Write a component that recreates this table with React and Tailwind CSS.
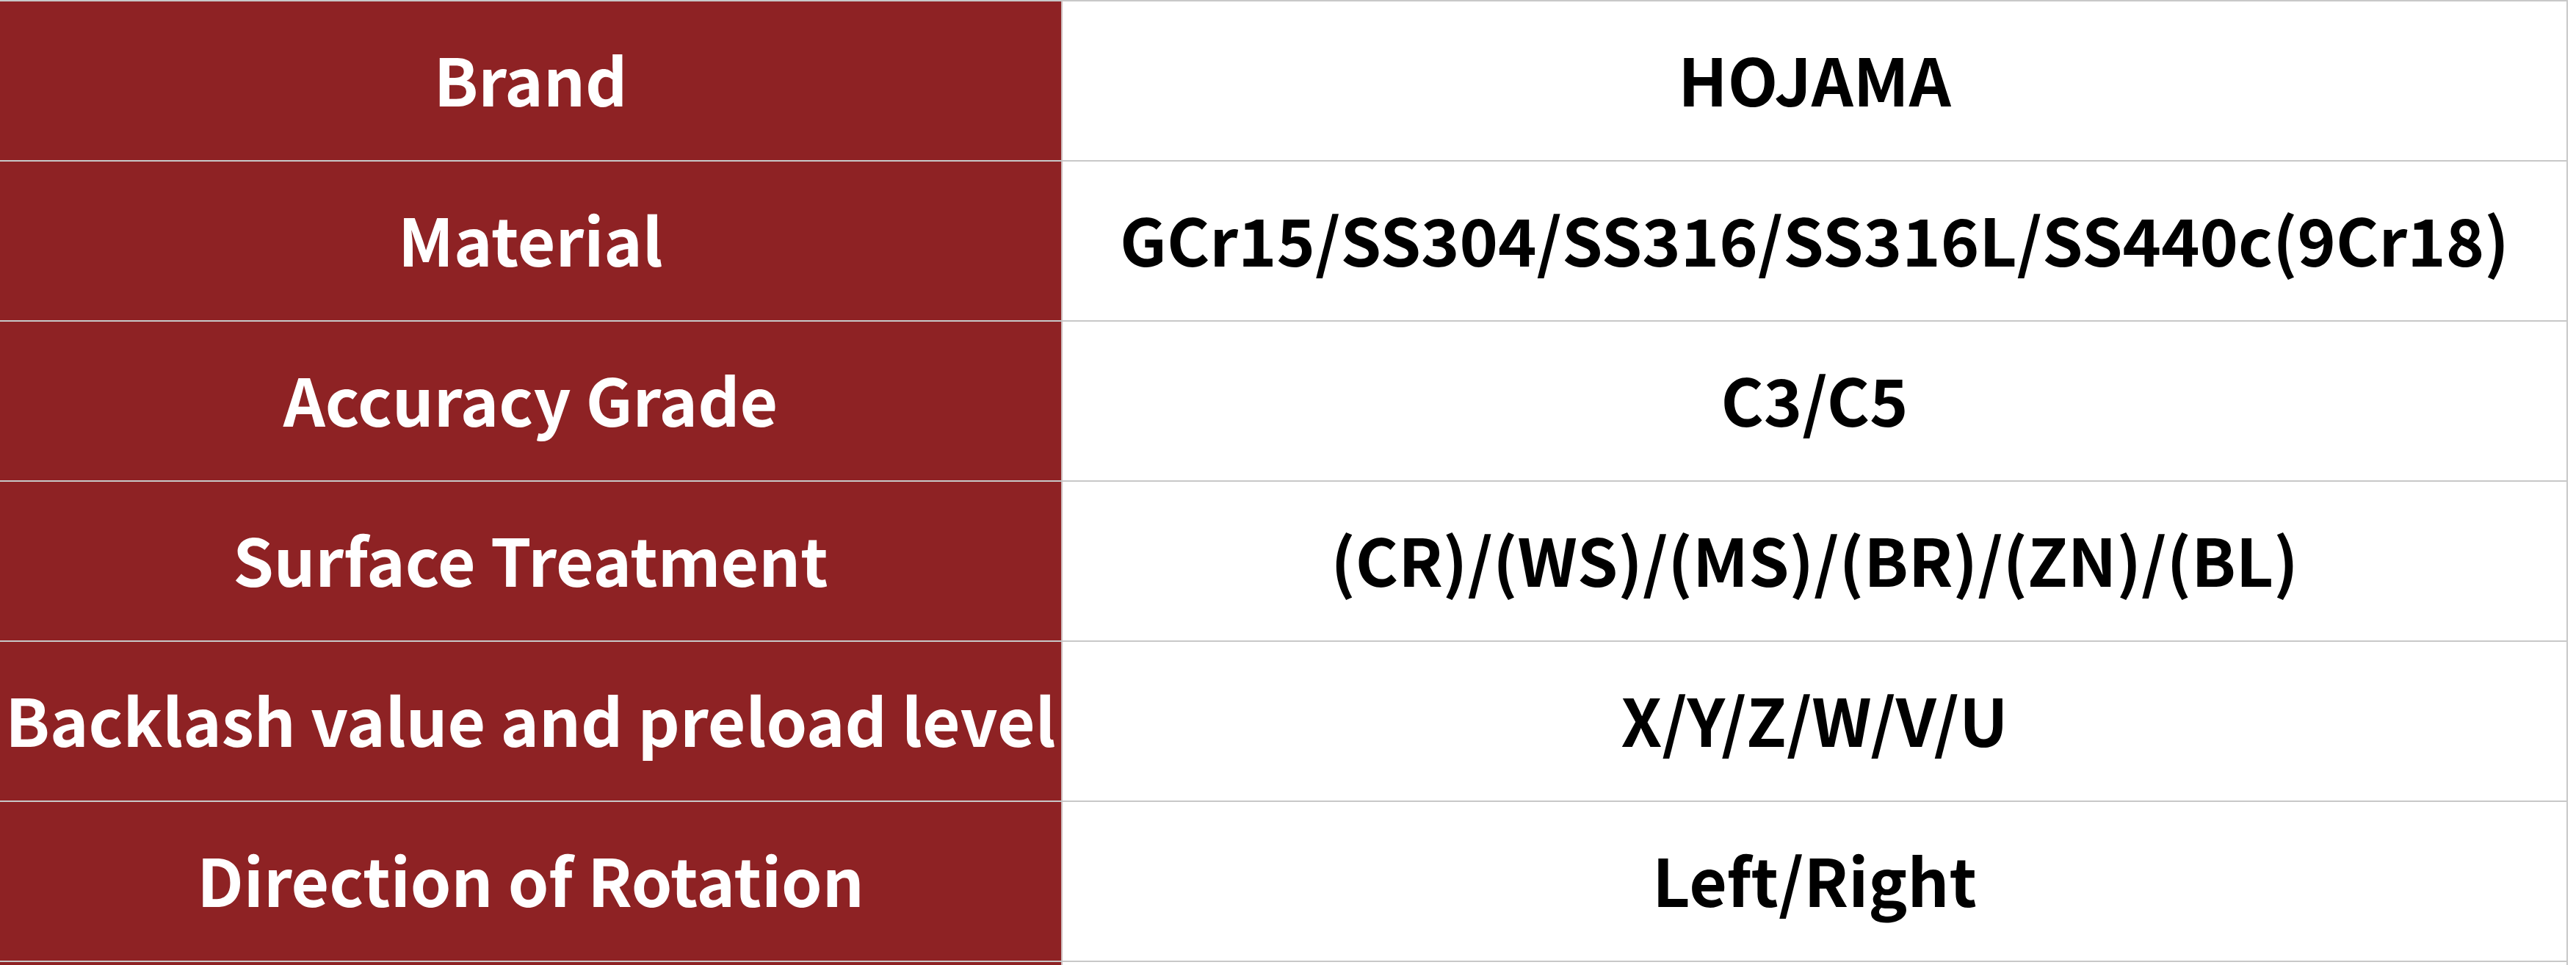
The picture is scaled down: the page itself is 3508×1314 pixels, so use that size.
import React from "react";

const rows = [
  ["Brand", "HOJAMA"],
  ["Material", "GCr15/SS304/SS316/SS316L/SS440c(9Cr18)"],
  ["Accuracy Grade", "C3/C5"],
  ["Surface Treatment", "(CR)/(WS)/(MS)/(BR)/(ZN)/(BL)"],
  ["Backlash value and preload level", "X/Y/Z/W/V/U"],
  ["Direction of Rotation", "Left/Right"],
  ["", ""],
];

const SpecRow = ({ label, value }) => {
  return (
    <div className="grid grid-cols-[1447px_1fr] border-b-2 border-[#c8c8c8]">
      <div className="h-[216px] pb-[8px] flex items-center justify-center bg-[#8e2224] text-white border-r-2 border-[#cdbdbd] whitespace-nowrap">
        {label}
      </div>
      <div className="h-[216px] pb-[8px] flex items-center justify-center bg-white text-black border-r-2 border-[#c8c8c8] whitespace-nowrap">
        {value}
      </div>
    </div>
  );
};

export default function App() {
  return (
    <div className="w-[3508px] h-[1314px] overflow-hidden bg-white">
      <div
        className="w-[3497px] border-t-2 border-[#c8c8c8] text-[89px] font-bold leading-none"
        style={{ fontFamily: '"Noto Sans CJK SC", "Noto Sans", sans-serif' }}
      >
        {rows.map(([label, value], i) => (
          <SpecRow key={i} label={label} value={value} />
        ))}
      </div>
    </div>
  );
}
